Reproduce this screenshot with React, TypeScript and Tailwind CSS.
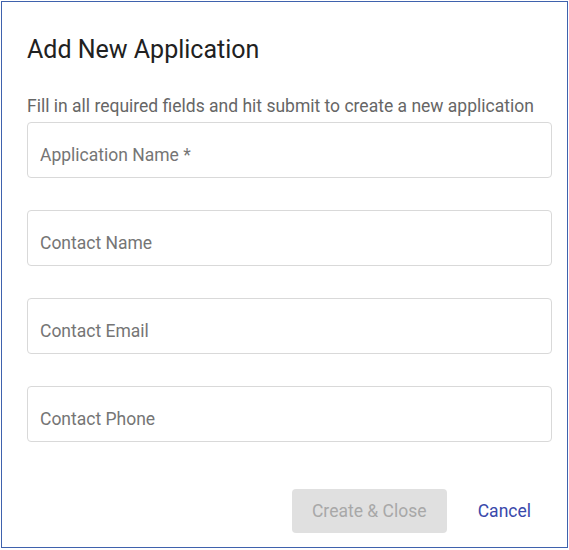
export default function App() {
  const fields = ["Application Name *", "Contact Name", "Contact Email", "Contact Phone"];

  return (
    <div className="w-[569px] h-[550px] bg-white p-px">
      <div
        className="w-[567px] h-[547px] border border-[#3f62ad] flex flex-col pl-[25px] pr-[15px]"
        style={{ fontFamily: "Roboto, 'Liberation Sans', sans-serif" }}
      >
        <h2 className="mt-[33px] text-[25px] leading-[30px] text-[#212121]">Add New Application</h2>

        <p className="mt-[30px] text-[17.5px] leading-[22px] text-[#666666]">
          Fill in all required fields and hit submit to create a new application
        </p>

        <div className="mt-[5px] flex flex-col gap-[32px]">
          {fields.map((f) => (
            <input
              key={f}
              placeholder={f}
              className="h-[56px] w-full rounded border border-[#d9d9d9] px-[12px] pt-[10px] text-[17.5px] text-[#212121] placeholder:text-[#757575] outline-none"
            />
          ))}
        </div>

        <div className="mt-auto mb-[14px] flex items-center justify-end gap-[23px]">
          <button
            disabled
            className="h-[44px] w-[155px] rounded bg-[#e0e0e0] text-[17.5px] text-[#a8a8a8]"
          >
            Create &amp; Close
          </button>
          <button className="h-[44px] px-[8px] mr-[13px] text-[17.5px] text-[#3949ab]">Cancel</button>
        </div>
      </div>
    </div>
  );
}
